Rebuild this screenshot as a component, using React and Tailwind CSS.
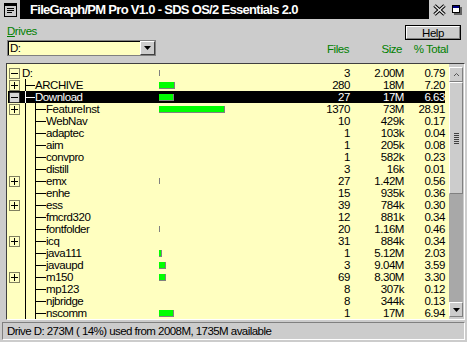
import React from 'react'

const rows = [
  { name: 'D:', level: 0, box: '-', files: '3', size: '2.00M', pct: '0.79', bar: 1 },
  { name: 'ARCHIVE', level: 1, box: '+', files: '280', size: '18M', pct: '7.20', bar: 16 },
  { name: 'Download', level: 1, box: '-', files: '27', size: '17M', pct: '6.63', bar: 15, sel: true },
  { name: 'FeatureInst', level: 2, box: '+', files: '1370', size: '73M', pct: '28.91', bar: 66 },
  { name: 'WebNav', level: 2, files: '10', size: '429k', pct: '0.17', bar: 0 },
  { name: 'adaptec', level: 2, files: '1', size: '103k', pct: '0.04', bar: 0 },
  { name: 'aim', level: 2, files: '1', size: '205k', pct: '0.08', bar: 0 },
  { name: 'convpro', level: 2, files: '1', size: '582k', pct: '0.23', bar: 0 },
  { name: 'distill', level: 2, files: '3', size: '16k', pct: '0.01', bar: 0 },
  { name: 'emx', level: 2, box: '+', files: '27', size: '1.42M', pct: '0.56', bar: 1 },
  { name: 'enhe', level: 2, files: '15', size: '935k', pct: '0.36', bar: 0 },
  { name: 'ess', level: 2, box: '+', files: '39', size: '784k', pct: '0.30', bar: 0 },
  { name: 'fmcrd320', level: 2, files: '12', size: '881k', pct: '0.34', bar: 0 },
  { name: 'fontfolder', level: 2, files: '20', size: '1.16M', pct: '0.46', bar: 1 },
  { name: 'icq', level: 2, box: '+', files: '31', size: '884k', pct: '0.34', bar: 0 },
  { name: 'java111', level: 2, files: '1', size: '5.12M', pct: '2.03', bar: 3 },
  { name: 'javaupd', level: 2, files: '3', size: '9.04M', pct: '3.59', bar: 7 },
  { name: 'm150', level: 2, box: '+', files: '69', size: '8.30M', pct: '3.30', bar: 7 },
  { name: 'mp123', level: 2, files: '8', size: '307k', pct: '0.12', bar: 0 },
  { name: 'njbridge', level: 2, files: '8', size: '344k', pct: '0.13', bar: 0 },
  { name: 'nscomm', level: 2, files: '1', size: '17M', pct: '6.94', bar: 15 },
]

function ExpandBox({ sign, sel }) {
  return (
    <svg width="11" height="11" viewBox="0 0 11 11">
      <rect x="0.5" y="0.5" width="10" height="10" fill={sel ? '#d8d8d8' : 'none'} stroke="#000" strokeDasharray="1 1" />
      <line x1="2" y1="5.5" x2="9" y2="5.5" stroke="#000" />
      {sign === '+' && <line x1="5.5" y1="2" x2="5.5" y2="9" stroke="#000" />}
    </svg>
  )
}

function TreeLines({ level, sel }) {
  const c = sel ? '#fff' : '#000'
  if (level === 0) return <div className="w-[2px]" />
  if (level === 1)
    return (
      <svg width="15" height="12" className="shrink-0">
        <line x1="5.5" y1="0" x2="5.5" y2="12" stroke={c} />
        <line x1="5" y1="6.5" x2="15" y2="6.5" stroke={c} />
      </svg>
    )
  return (
    <svg width="26" height="12" className="shrink-0">
      <line x1="5.5" y1="0" x2="5.5" y2="12" stroke={c} />
      <line x1="15.5" y1="0" x2="15.5" y2="12" stroke={c} />
      <line x1="15" y1="6.5" x2="26" y2="6.5" stroke={c} />
    </svg>
  )
}

function Bar({ w }) {
  if (!w) return null
  if (w < 3) return <div className="w-px h-[6px] bg-[#808080]" />
  return <div className="h-[7px] bg-[#00ff00] border-r border-b border-[#808080]" style={{ width: w }} />
}

function Row({ r }) {
  return (
    <div className={`flex h-[12px] items-center leading-[12px] ${r.sel ? 'bg-black text-white' : 'text-black'}`}>
      <div className="w-[12px] h-[12px] flex items-center pl-px">
        {r.box && <ExpandBox sign={r.box} sel={r.sel} />}
      </div>
      <div className="w-[139px] flex items-center overflow-hidden whitespace-nowrap">
        <TreeLines level={r.level} sel={r.sel} />
        <span>{r.name}</span>
      </div>
      <div className="w-[141px] flex items-center">
        <Bar w={r.bar} />
      </div>
      <div className="w-[50px] text-right">{r.files}</div>
      <div className="w-[54px] text-right">{r.size}</div>
      <div className="w-[41px] text-right">{r.pct}</div>
    </div>
  )
}

function Scrollbar() {
  return (
    <div className="w-[14px] flex flex-col pt-[3px] pb-[2px] bg-[#cccccc]">
      <div className="h-[15px] bg-[#cccccc] border-t border-l border-white border-r border-b border-r-[#808080] border-b-[#808080] flex items-center justify-center">
        <svg width="7" height="5"><polyline points="1,4 3.5,1.5 6,4" fill="none" stroke="#555" /></svg>
      </div>
      <div className="h-[112px] bg-[#cccccc] border-t border-l border-white border-r border-b border-r-[#808080] border-b-[#808080] flex flex-col items-center justify-center gap-px">
        {[0, 1, 2, 3, 4, 5].map(i => <div key={i} className="w-[5px] h-px bg-[#404040]" />)}
      </div>
      <div className="flex-1 bg-[#a8a8a8]" />
      <div className="h-[15px] bg-[#cccccc] border-t border-l border-white border-r border-b border-r-[#808080] border-b-[#808080] flex items-center justify-center">
        <svg width="7" height="4"><polygon points="0,0 7,0 3.5,4" fill="#000" /></svg>
      </div>
    </div>
  )
}

export default function App() {
  return (
    <div
      className="w-[467px] h-[342px] bg-[#cccccc] flex flex-col overflow-hidden text-[11.5px] tracking-[-0.45px]"
      style={{ fontFamily: '"Liberation Sans", Arial, sans-serif' }}
    >
      {/* title bar */}
      <div className="h-[19px] flex">
        <div className="w-[20px] flex items-center justify-center">
          <svg width="13" height="14" viewBox="0 0 13 14">
            <rect x="0.5" y="0.5" width="12" height="13" fill="#cccccc" stroke="#000" />
            <rect x="1" y="1" width="11" height="2" fill="#000" />
            <line x1="3" y1="5.5" x2="10" y2="5.5" stroke="#000" />
            <line x1="3" y1="7.5" x2="10" y2="7.5" stroke="#000" />
            <line x1="3" y1="9.5" x2="8" y2="9.5" stroke="#000" />
          </svg>
        </div>
        <div className="flex-1 bg-black text-white font-bold text-[13px] tracking-[-0.7px] leading-[19px] pl-[10px] whitespace-nowrap overflow-hidden">
          FileGraph/PM Pro V1.0 - SDS OS/2 Essentials 2.0
        </div>
        <div className="w-[38px] flex items-center gap-[6px] pl-[4px]">
          <svg width="13" height="12" viewBox="0 0 13 12">
            <line x1="1.5" y1="1.5" x2="11.5" y2="10.5" stroke="#000" strokeWidth="3.5" />
            <line x1="11.5" y1="1.5" x2="1.5" y2="10.5" stroke="#000" strokeWidth="3.5" />
            <line x1="1.5" y1="1.5" x2="11.5" y2="10.5" stroke="#e8e8e8" strokeWidth="1.5" />
            <line x1="11.5" y1="1.5" x2="1.5" y2="10.5" stroke="#e8e8e8" strokeWidth="1.5" />
          </svg>
          <svg width="10" height="10" viewBox="0 0 10 10">
            <rect x="2" y="2" width="8" height="8" fill="#606060" />
            <rect x="0.5" y="0.5" width="7" height="7" fill="#fff" stroke="#000" />
            <rect x="1" y="1" width="6" height="2" fill="#000080" />
          </svg>
        </div>
      </div>

      {/* drive selector + headers */}
      <div className="h-[44px] flex">
        <div className="w-[156px] pl-[7px] pt-[6px] flex flex-col">
          <div className="h-[12px] leading-[12px] text-[#008000]">
            <span className="underline">D</span>rives
          </div>
          <div className="mt-[3px] h-[16px] flex border border-[#808080]">
            <div className="flex-1 flex border-t border-l border-black bg-[#ffffc0] leading-[13px] pl-px">D:</div>
            <div className="w-[15px] bg-[#cccccc] border-t border-l border-white border-r border-b border-r-[#404040] border-b-[#404040] flex items-center justify-center">
              <svg width="7" height="4"><polygon points="0,0 7,0 3.5,4" fill="#000" /></svg>
            </div>
          </div>
        </div>
        <div className="flex-1 flex flex-col items-end pt-[6px]">
          <div className="mr-[6px] w-[56px] h-[15px] border border-black flex">
            <div className="flex-1 border-t border-l border-white border-r border-b border-r-[#808080] border-b-[#808080] text-center leading-[12px]">
              Help
            </div>
          </div>
          <div className="mt-[3px] flex w-full pr-[19px] justify-end text-[#008000] leading-[12px]">
            <div className="w-[49px] text-right">Files</div>
            <div className="w-[53px] text-right">Size</div>
            <div className="w-[46px] text-right">% Total</div>
          </div>
        </div>
      </div>

      {/* tree list */}
      <div className="h-[257px] ml-[6px] mr-[2px] flex border-t border-l border-[#404040] border-r border-b border-r-white border-b-white bg-[#ffffc0]">
        <div className="flex-1 pl-px pt-[3px] flex flex-col">
          {rows.map(r => <Row key={r.name} r={r} />)}
        </div>
        <div className="w-[4px]" />
        <Scrollbar />
        <div className="w-px bg-[#cccccc]" />
      </div>

      {/* status bar */}
      <div className="mt-[2px] mx-[2px] h-[18px] border-t border-l border-[#808080] border-r border-b border-r-white border-b-white pl-[4px] leading-[16px] tracking-[-0.55px] whitespace-nowrap">
        Drive D: 273M ( 14%) used from 2008M, 1735M available
      </div>
    </div>
  )
}
